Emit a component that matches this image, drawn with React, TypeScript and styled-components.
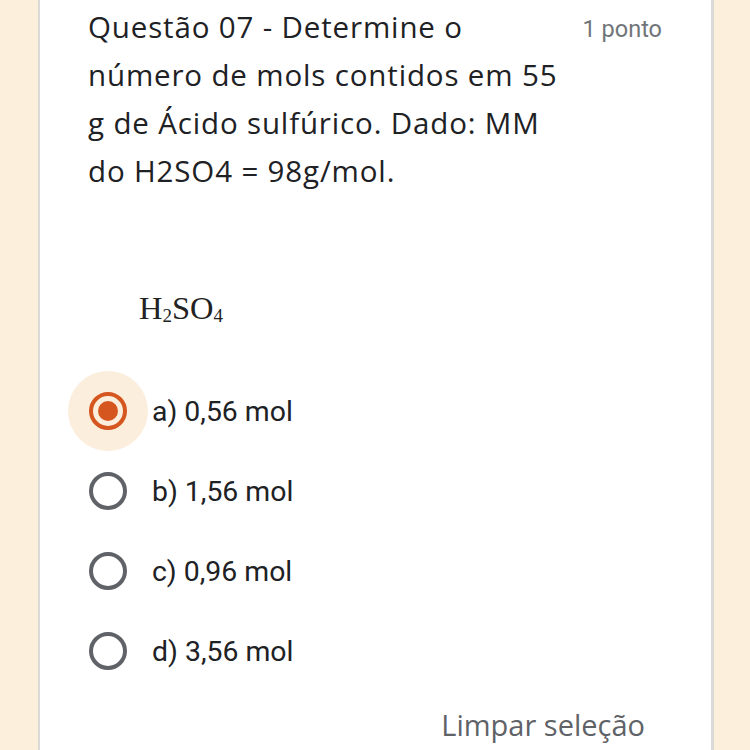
import React from "react";
import styled, { createGlobalStyle } from "styled-components";

const Global = createGlobalStyle`
  html, body { margin: 0; padding: 0; background: #fcefdc; }
  body { width: 750px; height: 750px; overflow: hidden; }
`;

const Page = styled.div`
  width: 750px;
  height: 750px;
  display: flex;
  background: #fcefdc;
`;

const Card = styled.div`
  margin-left: 38px;
  width: 623px;
  height: 750px;
  background: #ffffff;
  border-left: 2px solid #dcdad6;
  border-right: 3px solid #dcdad6;
  padding: 0 0 0 48px;
  box-sizing: content-box;
  display: flex;
  flex-direction: column;
  font-family: "Roboto", "Liberation Sans", sans-serif;
`;

const Header = styled.div`
  display: flex;
  justify-content: space-between;
  align-items: flex-start;
  padding-top: 3px;
  padding-right: 49px;
`;

const Title = styled.div`
  width: 482px;
  font-family: "Open Sans", "Liberation Sans", sans-serif;
  font-size: 29.5px;
  line-height: 48px;
  color: #202124;
  letter-spacing: 0.85px;
`;

const Points = styled.div`
  font-size: 23.5px;
  line-height: 48px;
  color: #70757a;
  padding-top: 2px;
`;

const Formula = styled.div`
  margin-top: 98px;
  margin-left: 51px;
  font-family: "Liberation Serif", "Times New Roman", serif;
  font-size: 32.5px;
  color: #222;
  height: 30px;
  line-height: 30px;
  letter-spacing: 0;
  sub {
    font-size: 19px;
    vertical-align: -3px;
    line-height: 0;
  }
`;

const Options = styled.div`
  margin-top: 48px;
  margin-left: -20px;
  display: flex;
  flex-direction: column;
`;

const Option = styled.div`
  height: 80px;
  display: flex;
  align-items: center;
  gap: 4px;
`;

const Halo = styled.div<{ $on?: boolean }>`
  width: 80px;
  height: 80px;
  border-radius: 50%;
  background: ${(p) => (p.$on ? "#fbeedc" : "transparent")};
  display: flex;
  align-items: center;
  justify-content: center;
`;

const Radio = styled.div<{ $on?: boolean }>`
  width: 30px;
  height: 30px;
  border-radius: 50%;
  border: 4px solid ${(p) => (p.$on ? "#d5561f" : "#5f6368")};
  display: flex;
  align-items: center;
  justify-content: center;
`;

const Dot = styled.div`
  width: 20px;
  height: 20px;
  border-radius: 50%;
  background: #d5561f;
`;

const Label = styled.div`
  font-size: 28.4px;
  color: #202124;
`;

const Footer = styled.div`
  margin-top: 14px;
  align-self: flex-end;
  margin-right: 66px;
  font-family: "Open Sans", "Liberation Sans", sans-serif;
  font-size: 29px;
  line-height: 40px;
  color: #5f6368;
`;

const opts = ["a) 0,56 mol", "b) 1,56 mol", "c) 0,96 mol", "d) 3,56 mol"];

export default function App() {
  return (
    <Page>
      <Global />
      <Card>
        <Header>
          <Title>
            Questão 07 - Determine o número de mols contidos em 55 g de Ácido sulfúrico. Dado: MM do H2SO4 = 98g/mol.
          </Title>
          <Points>1 ponto</Points>
        </Header>
        <Formula>
          H<sub>2</sub>SO<sub>4</sub>
        </Formula>
        <Options>
          {opts.map((o, i) => (
            <Option key={o}>
              <Halo $on={i === 0}>
                <Radio $on={i === 0}>{i === 0 && <Dot />}</Radio>
              </Halo>
              <Label>{o}</Label>
            </Option>
          ))}
        </Options>
        <Footer>Limpar seleção</Footer>
      </Card>
    </Page>
  );
}
